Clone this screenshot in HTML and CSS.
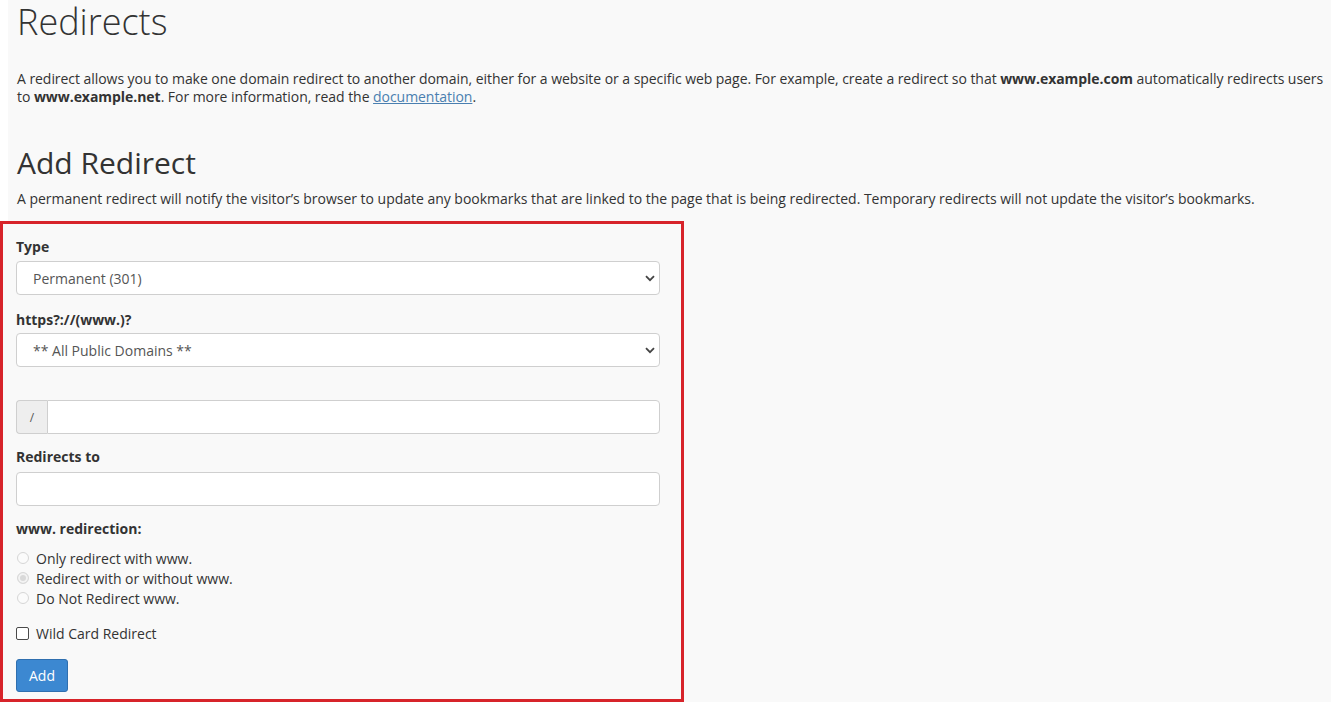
FILE: index.html
```html
<!DOCTYPE html>
<html>
<head>
<meta charset="utf-8">
<link rel="stylesheet" href="styles.css">
<title>Redirects</title>
</head>
<body>
<div class="page">
  <h1 class="title">Redirects</h1>
  <p class="intro">A redirect allows you to make one domain redirect to another domain, either for a website or a specific web page. For example, create a redirect so that <b>www.example.com</b> automatically redirects users to <b>www.example.net</b>. For more information, read the <a href="#">documentation</a>.</p>
  <h2 class="subtitle">Add Redirect</h2>
  <p class="desc">A permanent redirect will notify the visitor’s browser to update any bookmarks that are linked to the page that is being redirected. Temporary redirects will not update the visitor’s bookmarks.</p>

  <form class="box">
    <label class="lbl">Type</label>
    <div class="select-wrap">
      <select class="ctl"><option>Permanent (301)</option></select>
      <svg class="chev" width="10" height="7" viewBox="0 0 10 7"><path d="M1 1.2 L5 5.2 L9 1.2" fill="none" stroke="#444" stroke-width="1.8"/></svg>
    </div>

    <label class="lbl lbl-2">https?://(www.)?</label>
    <div class="select-wrap">
      <select class="ctl"><option>** All Public Domains **</option></select>
      <svg class="chev" width="10" height="7" viewBox="0 0 10 7"><path d="M1 1.2 L5 5.2 L9 1.2" fill="none" stroke="#444" stroke-width="1.8"/></svg>
    </div>

    <div class="group">
      <span class="addon">/</span>
      <input class="ctl grp-input" type="text">
    </div>

    <label class="lbl lbl-3">Redirects to</label>
    <input class="ctl" type="text">

    <label class="lbl lbl-4">www. redirection:</label>
    <div class="radios">
      <div class="opt"><span class="radio"></span>Only redirect with www.</div>
      <div class="opt"><span class="radio on"></span>Redirect with or without www.</div>
      <div class="opt"><span class="radio"></span>Do Not Redirect www.</div>
    </div>

    <div class="opt check-row"><span class="check"></span>Wild Card Redirect</div>

    <button class="btn" type="button">Add</button>
  </form>
</div>
</body>
</html>
```

FILE: styles.css
```css
html, body {
  margin: 0;
  padding: 0;
  background: #ffffff;
}
body {
  font-family: "Open Sans", "Noto Sans", sans-serif;
  color: #333;
  font-size: 14px;
}
.page {
  margin-left: 8px;
  background: #f9f9f9;
  padding: 0 0 0 9px;
  min-height: 702px;
}
.title {
  margin: 0;
  padding-top: 0;
  font-size: 36px;
  font-weight: 300;
  line-height: 44px;
  color: #333;
}
.intro {
  margin: 26px 0 0 0;
  line-height: 18px;
  color: #333;
  letter-spacing: -0.05px;
}
.intro b { font-weight: 700; }
.intro a { color: #4a7fb0; text-decoration: underline; }
.subtitle {
  margin: 39px 0 0 0;
  font-size: 30px;
  font-weight: 400;
  line-height: 36px;
  color: #333;
}
.desc {
  margin: 8px 0 0 0;
  line-height: 20px;
  letter-spacing: -0.02px;
}
.box {
  margin: 12px 0 0 -17px;
  width: 644px;
  border: 3px solid #d7242a;
  padding: 13px 21px 7px 13px;
  background: #f9f9f9;
}
.lbl {
  display: block;
  font-weight: 700;
  line-height: 20px;
  margin-bottom: 4px;
}
.lbl-2 { margin-top: 15px; margin-bottom: 3px; }
.lbl-3 { margin-top: 13px; margin-bottom: 5px; }
.lbl-4 { margin-top: 13px; margin-bottom: 9px; }
.select-wrap {
  position: relative;
}
.ctl {
  display: block;
  box-sizing: border-box;
  width: 100%;
  height: 34px;
  border: 1px solid #cfcfcf;
  border-radius: 4px;
  background: #fff;
  font-family: inherit;
  font-size: 14px;
  color: #555;
  padding: 0 16px;
  margin: 0;
  outline: none;
}
select.ctl {
  -webkit-appearance: none;
  appearance: none;
}
.chev {
  position: absolute;
  right: 5px;
  top: 14px;
  pointer-events: none;
}
.group {
  display: flex;
  margin-top: 33px;
}
.addon {
  box-sizing: border-box;
  width: 31px;
  height: 34px;
  border: 1px solid #cfcfcf;
  border-right: none;
  border-radius: 4px 0 0 4px;
  background: #eee;
  color: #555;
  font-size: 12px;
  display: flex;
  align-items: center;
  justify-content: center;
}
.grp-input {
  flex: 1;
  border-radius: 0 4px 4px 0;
}
.radios {
  display: flex;
  flex-direction: column;
}
.opt {
  display: flex;
  align-items: center;
  height: 20px;
  color: #333;
}
.radio {
  box-sizing: border-box;
  width: 12px;
  height: 12px;
  border: 1px solid #d6d6d6;
  border-radius: 50%;
  background: #fbfbfb;
  margin: 0 7px 0 1px;
  position: relative;
}
.radio.on {
  background: #d9d9d9;
  border-color: #d9d9d9;
  box-shadow: inset 0 0 0 2px #f3f3f3;
}
.check-row {
  margin-top: 15px;
}
.check {
  box-sizing: border-box;
  width: 13px;
  height: 13px;
  border: 1px solid #4a4a4a;
  border-radius: 2px;
  background: #fff;
  margin: 0 7px 0 0;
}
.btn {
  display: block;
  margin-top: 16px;
  width: 52px;
  height: 33px;
  border: 1px solid #2f6faf;
  border-radius: 3px;
  background: #3c88d1;
  color: #fff;
  font-family: inherit;
  font-size: 14px;
  padding: 0;
}
```
